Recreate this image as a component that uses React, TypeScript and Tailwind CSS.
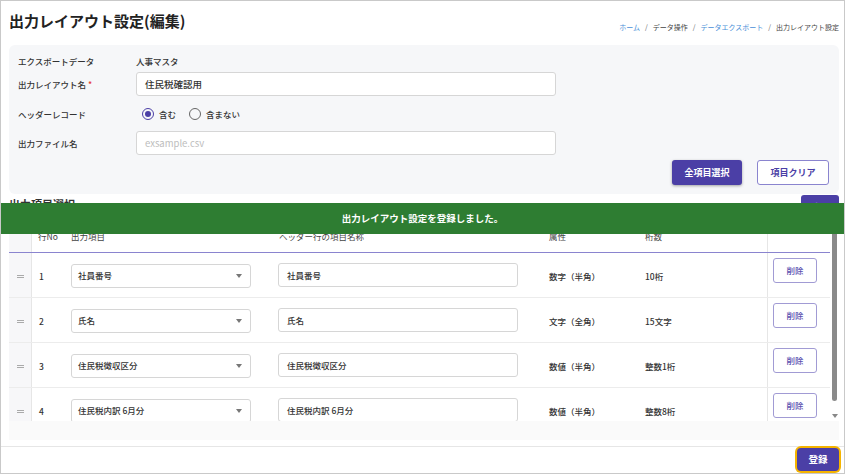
const rows = [
  { no: 1, item: '社員番号', name: '社員番号', attr: '数字（半角）', digits: '10桁' },
  { no: 2, item: '氏名', name: '氏名', attr: '文字（全角）', digits: '15文字' },
  { no: 3, item: '住民税徴収区分', name: '住民税徴収区分', attr: '数値（半角）', digits: '整数1桁' },
  { no: 4, item: '住民税内訳 6月分', name: '住民税内訳 6月分', attr: '数値（半角）', digits: '整数8桁' },
]

const GRID = 'grid grid-cols-[23px_34px_206px_272px_96px_127px_63px]'

function Radio({ checked, label }: { checked?: boolean; label: string }) {
  return (
    <label className="flex items-center gap-[5px]">
      <span
        className={`w-[12px] h-[12px] rounded-full border-[1.5px] flex items-center justify-center ${
          checked ? 'border-[#4b3fa6]' : 'border-[#666]'
        }`}
      >
        {checked && <span className="w-[6px] h-[6px] rounded-full bg-[#4b3fa6]" />}
      </span>
      <span className="text-[8.5px] text-[#333] font-medium">{label}</span>
    </label>
  )
}

export default function App() {
  return (
    <div className="w-[845px] h-[474px] bg-white border border-[#c9c9c9] overflow-hidden relative flex flex-col font-[family-name:'Noto_Sans_CJK_JP','Noto_Sans',sans-serif] text-[#333]">
      {/* Header */}
      <div className="h-[44px] pl-[8px] pr-[5px] flex justify-between items-start">
        <h1 className="mt-[8px] text-[15px] leading-[24px] font-bold text-[#222]">出力レイアウト設定(編集)</h1>
        <nav className="mt-[20px] flex items-center gap-[5px] text-[7px] leading-[12px]">
          <span className="text-[#4a8fd8]">ホーム</span>
          <span className="text-[#666]">/</span>
          <span className="text-[#444]">データ操作</span>
          <span className="text-[#666]">/</span>
          <span className="text-[#4a8fd8]">データエクスポート</span>
          <span className="text-[#666]">/</span>
          <span className="text-[#444]">出力レイアウト設定</span>
        </nav>
      </div>

      <div className="pl-[8px] pr-[5px] flex flex-col">
        {/* Form panel */}
        <div className="bg-[#f6f7f9] rounded-[6px] pt-[8px] pb-[9px] pl-[9px] pr-[10px] flex flex-col">
          <div className="flex items-center h-[16px] text-[8.5px] font-medium">
            <span className="w-[118px]">エクスポートデータ</span>
            <span>人事マスタ</span>
          </div>
          <div className="flex items-center h-[24px] mt-[3px] text-[8.5px] font-medium">
            <span className="w-[118px]">
              出力レイアウト名 <span className="text-[#e53935]">*</span>
            </span>
            <div className="w-[420px] h-[24px] bg-white border border-[#d6d6d6] rounded-[3px] flex items-center px-[8px] text-[9.5px] text-[#333]">
              住民税確認用
            </div>
          </div>
          <div className="flex items-center h-[24px] mt-[6px] text-[8.5px] font-medium">
            <span className="w-[124px]">ヘッダーレコード</span>
            <div className="flex items-center gap-[13px]">
              <Radio checked label="含む" />
              <Radio label="含まない" />
            </div>
          </div>
          <div className="flex items-center h-[24px] mt-[5px] text-[8.5px] font-medium">
            <span className="w-[118px]">出力ファイル名</span>
            <div className="w-[420px] h-[24px] bg-white border border-[#d6d6d6] rounded-[3px] flex items-center px-[8px] text-[9.5px] text-[#bdbdbd] font-normal">
              exsample.csv
            </div>
          </div>
          <div className="flex justify-end gap-[15px] mt-[5px]">
            <button className="w-[70px] h-[25px] rounded-[3px] bg-[#4b3fa6] text-white text-[9px] font-bold shadow-[0_1px_3px_rgba(0,0,0,0.35)]">
              全項目選択
            </button>
            <button className="w-[72px] h-[25px] rounded-[3px] bg-white border border-[#8a84cf] text-[#4b3fa6] text-[9px] font-bold">
              項目クリア
            </button>
          </div>
        </div>

        {/* Section heading */}
        <div className="h-[27px] flex justify-between items-start pt-[1px]">
          <h2 className="text-[11px] font-bold leading-[16px] mt-[1px]">出力項目選択</h2>
          <button className="w-[38px] h-[25px] rounded-[3px] bg-[#4b3fa6] text-white text-[9px] font-bold">追加</button>
        </div>

        {/* Table */}
        <div className="flex h-[200px] overflow-hidden">
          <div className="w-[821px] flex flex-col text-[8.5px]">
            <div className={`${GRID} h-[32px] shrink-0 border-b border-[#8a84cf] text-[#444]`}>
              <div className="bg-[#f7f7f9] border-r border-[#e6e6e6]" />
              <div className="pl-[6px] flex items-center">行No</div>
              <div className="pl-[5px] flex items-center">出力項目</div>
              <div className="pl-[7px] flex items-center">ヘッダー行の項目名称</div>
              <div className="pl-[5px] flex items-center">属性</div>
              <div className="pl-[5px] flex items-center">桁数</div>
              <div className="border-l border-[#e6e6e6]" />
            </div>
            {rows.map((r) => (
              <div key={r.no} className={`${GRID} h-[45px] shrink-0 border-b border-[#ececec]`}>
                <div className="bg-[#f7f7f9] border-r border-[#e6e6e6] flex items-center justify-center pt-[2px]">
                  <span className="w-[7px] h-[3px] border-y border-[#aaa]" />
                </div>
                <div className="pl-[7px] pt-[2px] flex items-center font-medium">{r.no}</div>
                <div className="pl-[5px] pt-[1px] flex items-center">
                  <div className="w-[180px] h-[24px] bg-white border border-[#d6d6d6] rounded-[3px] flex items-center justify-between pl-[6px] pr-[8px] font-medium">
                    <span>{r.item}</span>
                    <span className="w-0 h-0 border-x-[3px] border-x-transparent border-t-[4px] border-t-[#777]" />
                  </div>
                </div>
                <div className="pl-[6px] flex items-center">
                  <div className="w-[240px] h-[24px] bg-white border border-[#d6d6d6] rounded-[3px] flex items-center px-[8px] font-medium">
                    {r.name}
                  </div>
                </div>
                <div className="pl-[5px] pt-[2px] flex items-center font-medium">{r.attr}</div>
                <div className="pl-[5px] pt-[2px] flex items-center font-medium">{r.digits}</div>
                <div className="border-l border-[#e6e6e6] pl-[5px] pt-[5px]">
                  <button className="w-[44px] h-[25px] rounded-[3px] bg-white border border-[#a19bd4] text-[#5a50b0] text-[8.5px] font-medium">
                    削除
                  </button>
                </div>
              </div>
            ))}
          </div>
          {/* Scrollbar */}
          <div className="w-[9px] flex flex-col items-center">
            <div className="w-[5px] h-[169px] mt-[11px] rounded-full bg-[#8a8a8a]" />
            <span className="mt-[13px] w-0 h-0 border-x-[3px] border-x-transparent border-t-[4px] border-t-[#888]" />
          </div>
        </div>
        <div className="h-[19px] bg-[#fafafa]" />
      </div>

      {/* Footer */}
      <div className="mt-[6px] border-t border-[#e6e6e6] flex-1 flex justify-end items-start pt-[1px] pr-[5px]">
        <button className="w-[42px] h-[23px] rounded-[4px] bg-[#4b3fa6] text-white text-[9.5px] font-bold ring-2 ring-[#f5b400]">
          登録
        </button>
      </div>

      {/* Toast */}
      <div className="absolute left-0 right-0 top-[202px] h-[31px] bg-[#2e7d32] flex items-center justify-center text-white text-[9.5px] font-bold">
        出力レイアウト設定を登録しました。
      </div>
    </div>
  )
}
